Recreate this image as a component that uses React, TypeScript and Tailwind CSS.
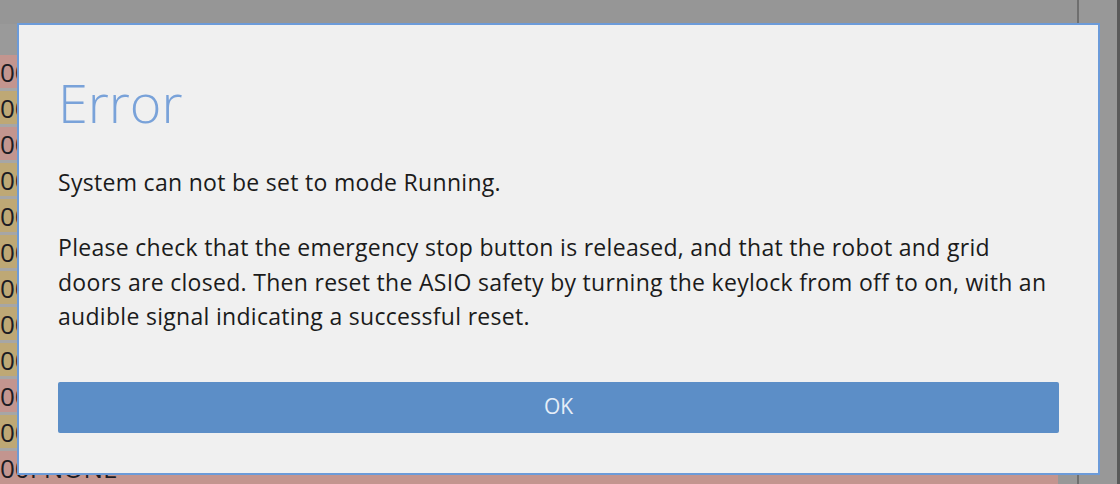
import React from "react";

const rows: { c: "r" | "y"; t: string }[] = [
  { c: "r", t: "001 NONE" },
  { c: "y", t: "007 NONE" },
  { c: "r", t: "001 NONE" },
  { c: "y", t: "001 NONE" },
  { c: "y", t: "001 NONE" },
  { c: "y", t: "001 NONE" },
  { c: "y", t: "001 NONE" },
  { c: "y", t: "001 NONE" },
  { c: "y", t: "001 NONE" },
  { c: "r", t: "001 NONE" },
  { c: "y", t: "007 NONE" },
  { c: "r", t: "00I NONE" },
];

export default function App() {
  return (
    <div
      className="relative w-[1120px] h-[484px] overflow-hidden bg-[#989898]"
      style={{ fontFamily: '"Open Sans", "Noto Sans", sans-serif' }}
    >
      {/* background app (dimmed) */}
      <div className="flex h-full">
        <div className="w-[1077px] flex flex-col">
          <div className="h-[27px] bg-[#969696]" />
          <div className="h-[36px] bg-[#9a9a9a]" />
          <div className="flex flex-col gap-[3px] bg-[#a6a6a6] w-[1058px]">
            {rows.map((r, i) => (
              <div
                key={i}
                className={`h-[33px] flex items-center text-[26px] leading-none text-[#1c1c24] whitespace-nowrap ${
                  r.c === "r" ? "bg-[#c3958f]" : "bg-[#bea875]"
                }`}
              >
                {r.t}
              </div>
            ))}
          </div>
        </div>
        <div className="w-[2px] bg-[#6f6f6f]" />
        <div className="w-[38px] bg-[#989898]" />
        <div className="w-[3px] bg-[#5a5a5a]" />
      </div>

      {/* modal dialog */}
      <div className="absolute left-[17px] top-[23px] w-[1083px] h-[452px] border-2 border-[#6c9bd9] bg-[#f0f0f0] px-[39px] flex flex-col">
        <h1 className="mt-[51px] text-[54px] leading-[52px] font-light text-[#79a2d9]">
          Error
        </h1>
        <div className="mt-[37px] text-[23px] tracking-[0.3px] leading-[34.5px] text-[#1b1b1b]">
          <p>System can not be set to mode Running.</p>
          <p className="mt-[30.5px] whitespace-nowrap">
            Please check that the emergency stop button is released, and that the robot and grid
            <br />
            doors are closed. Then reset the ASIO safety by turning the keylock from off to on, with an
            <br />
            audible signal indicating a successful reset.
          </p>
        </div>
        <button className="mt-[48px] h-[51px] w-full shrink-0 rounded-[2px] bg-[#5c8ec7] text-[21px] text-[#e6eef8]">
          OK
        </button>
      </div>
    </div>
  );
}
